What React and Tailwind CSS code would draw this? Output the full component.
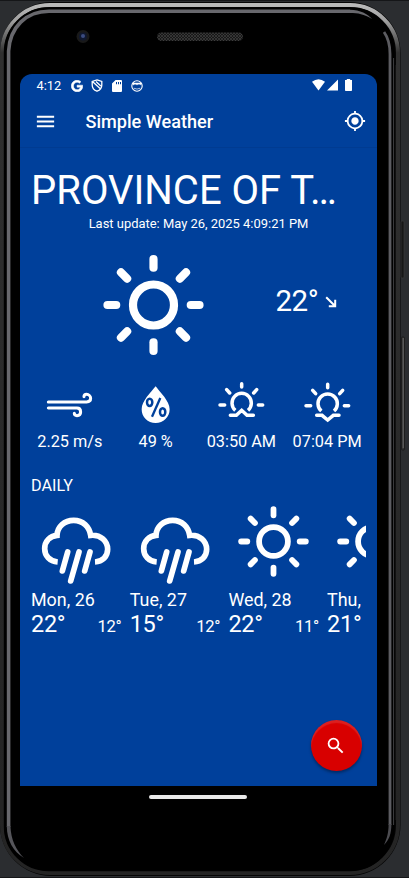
import { MdMenu, MdMyLocation, MdSearch } from "react-icons/md";
import { FaGoogle } from "react-icons/fa";

const RAYS = [0, 45, 90, 135, 180, 225, 270, 315];

function Sun({ className }) {
  return (
    <svg viewBox="0 0 101 101" className={className} fill="none" stroke="currentColor" strokeWidth="8.2" strokeLinecap="round">
      <circle cx="50.5" cy="50.5" r="20.5" />
      {RAYS.map((a) => (
        <path key={a} d="M50.5 13.2V4.5" transform={`rotate(${a} 50.5 50.5)`} />
      ))}
    </svg>
  );
}

function Rain({ className }) {
  return (
    <svg viewBox="64 78 212 208" className={className} fill="none" stroke="currentColor" strokeWidth="17">
      <path d="M114 216C90 214 75 197 75 176C75 153 91 138 112 136C113 110 134 91 162 91C190 91 209 110 213 136C243 133 264 153 264 178C264 200 248 215 226 216" />
      <path d="M144 186L128 243M178 186L153 273M211 186L195 243" strokeLinecap="round" />
    </svg>
  );
}

function Wind() {
  return (
    <svg viewBox="78 40 142 120" className="h-10 w-[47.3px]" fill="none" stroke="currentColor" strokeWidth="9" strokeLinecap="round">
      <path d="M85 94H200C208 94 212 89 212 83C212 76 206 71 200 71C194 71 192 75 192 78" />
      <path d="M85 112H171C179 112 182 118 182 124C182 131 177 135 171 135C166 135 163 132 163 128" />
    </svg>
  );
}

function Humidity() {
  return (
    <svg viewBox="358 40 100 120" className="h-10 w-[33.3px]">
      <path d="M408 47C421 65 450 91 450 116C450 140 431 157 408 157C384 157 366 140 366 116C366 91 394 65 408 47Z" fill="currentColor" />
      <g fill="none" stroke="#00409b">
        <ellipse cx="390" cy="95" rx="8" ry="11" strokeWidth="7.5" />
        <ellipse cx="429" cy="124" rx="8" ry="11.5" strokeWidth="7.5" />
        <path d="M422 82L397 138" strokeWidth="7" />
      </g>
    </svg>
  );
}

function Horizon({ set }) {
  return (
    <svg viewBox="80 30 146 126" className="-mt-[6px] h-[42px] w-[48.7px] overflow-visible" fill="none" stroke="currentColor" strokeWidth="10.5" strokeLinecap="round">
      <g transform={set ? "translate(0 2)" : undefined}>
        <path d="M154 41V51M109 59L118 69M199 59L190 69M89 105H103M204 105H217" />
        <path d="M135 121A29 29 0 1 1 173 121" strokeLinecap="butt" />
      </g>
      {set ? <path d="M121 136H137L154 150L171 136H188" /> : <path d="M120 136H138L154 121L170 136H189" />}
    </svg>
  );
}

function Bezel() {
  return (
    <svg aria-hidden="true" viewBox="0 0 409 878" className="absolute inset-0 h-full w-full" fill="none">
      <defs>
        <linearGradient id="rim" x1="0" y1="0" x2="0" y2="1">
          <stop offset="0" stopColor="#b9b9b9" />
          <stop offset=".018" stopColor="#a0a0a0" />
          <stop offset=".055" stopColor="#303030" />
          <stop offset="1" stopColor="#242424" />
        </linearGradient>
        <pattern id="mesh" width="3" height="3" patternUnits="userSpaceOnUse">
          <path d="M0 0H3V3H0Z" fill="#181818" />
          <path d="M0 0L3 3M3 0L0 3" stroke="#454545" strokeWidth=".6" />
        </pattern>
      </defs>
      <path d="M0 .5H409M0 877.5H409" stroke="#151618" />
      <rect x="0" y="2" width="400.5" height="874" rx="51" fill="#050505" />
      <rect x="2" y="5" width="396" height="868" rx="48" stroke="url(#rim)" strokeWidth="4" />
      <rect x="4.8" y="8.3" width="389" height="862" rx="44" stroke="#000" strokeWidth="2" fill="#000" />
      <path d="M8.6 827V51C10 27 26 11.3 49 11.3H350" stroke="#68686d" strokeWidth="3.6" />
      <path d="M350 9.8C360 10 368 14 372 19C364 14 358 13 350 13Z" fill="#68686d" />
      <path d="M384 32C389 39 390 46 390 54V825" stroke="#5c5c61" strokeWidth="2.8" />
      <path d="M6.8 826H10.4C11 840 16 850 24 858C13 851 7 841 6.8 826Z" fill="#55555a" />
      <path d="M388.6 824H391.4C391.4 834 389 840 384 845C387 838 388.6 833 388.6 824Z" fill="#4c4c51" />
      <path d="M393.6 58V825" stroke="#404043" />
      <path d="M395.5 65V820" stroke="#111" />
      <rect x="401" y="221" width="3" height="57" rx="1" fill="#171717" stroke="#3c3c3d" strokeWidth=".6" />
      <rect x="401.5" y="337" width="3" height="113" rx="1" fill="#333" stroke="#161616" strokeWidth=".7" />
      <path d="M403.2 338V448" stroke="#777" strokeWidth=".8" />
      <circle cx="83" cy="36.5" r="6.5" fill="#191919" />
      <circle cx="83" cy="36.5" r="4" fill="#10182f" />
      <circle cx="83" cy="36" r="2" fill="#3b4c80" />
      <rect x="157" y="32.5" width="86" height="8.5" rx="4.2" fill="url(#mesh)" />
    </svg>
  );
}

function StatusBar() {
  return (
    <div className="flex h-[23px] items-center pl-[16.5px] pr-[25px] text-[12.8px]">
      <span className="w-[34px]">4:12</span>
      <FaGoogle className="h-3 w-3" stroke="currentColor" strokeWidth="22" />
      <svg viewBox="0 0 12 13" className="ml-[8.5px] h-[13px] w-3" fill="none" stroke="currentColor" strokeWidth="1.3">
        <path d="M6 .9L10.8 2.5V6C10.8 9 8.8 11.2 6 12.2C3.2 11.2 1.2 9 1.2 6V2.5ZM2 3L9.6 10M5 2.5L9.8 7" />
      </svg>
      <svg viewBox="0 0 10 12" className="ml-[9px] h-3 w-2.5" fill="currentColor">
        <path fillRule="evenodd" d="M3.6 0H9Q10 0 10 1V11Q10 12 9 12H1Q0 12 0 11V3.6ZM4 2V4.2H5V2ZM6 2V4.2H7V2ZM8 2V4.2H9V2Z" />
      </svg>
      <svg viewBox="0 0 12 12" className="ml-[9px] h-3 w-3" fill="none" stroke="currentColor" strokeWidth="1.1">
        <circle cx="6" cy="6" r="5.2" />
        <path d="M1.5 3H10.5L9.8 4.8L8 4L6 4.8L4 4L2.2 5Z" fill="currentColor" strokeWidth=".5" />
        <path d="M2.8 8.2Q6 10 9.2 8.2" strokeWidth=".7" />
      </svg>
      <svg viewBox="0 0 40 12" className="ml-auto h-3 w-10 -translate-y-px" fill="currentColor">
        <path d="M0 2.8Q6.5-2.2 13 2.8L6.5 11.5Z" />
        <path d="M26 .5V11.5H15Z" />
        <path d="M34.8 1V0H38.2V1H40V11.2Q40 12 39.2 12H33.8Q33 12 33 11.2V1Z" />
      </svg>
    </div>
  );
}

const stats = [
  { icon: <Wind />, label: "2.25 m/s" },
  { icon: <Humidity />, label: "49 %" },
  { icon: <Horizon />, label: "03:50 AM" },
  { icon: <Horizon set />, label: "07:04 PM" },
];

const days = [
  { day: "Mon, 26", hi: "22°", lo: "12°", rain: true },
  { day: "Tue, 27", hi: "15°", lo: "12°", rain: true },
  { day: "Wed, 28", hi: "22°", lo: "11°" },
  { day: "Thu,", hi: "21°" },
];

export default function App() {
  return (
    <div className="relative h-[878px] w-[409px] overflow-hidden bg-[#2b2d30] pl-5 pt-[74px] font-['Roboto',sans-serif] text-white">
      <Bezel />
      <main className="relative flex h-[712px] w-[357px] flex-col rounded-t-[12px] bg-[#00409b]">
        <StatusBar />
        <header className="flex h-[51px] items-center border-b border-[#003b91] pl-[14px] pr-[11px]">
          <MdMenu className="h-[23px] w-[23px] -translate-y-px" />
          <h1 className="ml-[28.5px] text-[18.1px] font-medium">Simple Weather</h1>
          <MdMyLocation className="ml-auto h-[22px] w-[22px] -translate-y-px" />
        </header>
        <h2 className="-mb-px mt-[19px] h-12 pl-[11px] text-[40px] leading-[48px] whitespace-nowrap">PROVINCE OF T…</h2>
        <p className="h-5 text-center text-[12.95px] leading-5">Last update: May 26, 2025 4:09:21 PM</p>
        <section className="mt-5 flex h-[102px] items-center pl-[82.5px]">
          <Sun className="h-[101px] w-[101px] -translate-y-[0.5px]" />
          <div className="ml-[72px] flex -translate-y-[4px] items-center">
            <span className="text-[29.5px] leading-8 tracking-[-0.5px]">22°</span>
            <svg viewBox="0 0 12 12" className="ml-[7px] mt-0.5 h-3 w-3" fill="none" stroke="currentColor" strokeWidth="2">
              <path d="M1.2 1.2L10 10M10.2 3.8V10.2H3.8" />
            </svg>
          </div>
        </section>
        <section className="ml-[7px] mt-[25px] grid w-[343px] grid-cols-4">
          {stats.map((s) => (
            <div key={s.label} className="flex flex-col items-center">
              <div className="flex h-[46px] items-center">{s.icon}</div>
              <span className="mt-1 text-[16.3px] leading-[22px] whitespace-nowrap">{s.label}</span>
            </div>
          ))}
        </section>
        <h3 className="mt-[23px] pl-[11px] text-[16.2px] leading-[20px]">DAILY</h3>
        <section className="ml-[11px] mt-[10px] flex w-[335px] gap-[8.2px] overflow-hidden">
          {days.map((d) => (
            <div key={d.day} className="w-[90.5px] shrink-0">
              <div className="flex h-[83px] justify-center">
                {d.rain ? <Rain className="mt-[10px] h-[69.3px] w-[70.7px]" /> : <Sun className="h-[71px] w-[71px]" />}
              </div>
              <div className="text-[17.9px] leading-[22px]">{d.day}</div>
              <div className="flex h-[26px] items-baseline justify-between leading-[26px] tracking-[-0.3px]">
                <span className="text-[23.5px]">{d.hi}</span>
                {d.lo && <span className="text-[16.6px]">{d.lo}</span>}
              </div>
            </div>
          ))}
        </section>
        <button className="mb-[15px] ml-auto mr-[15.5px] mt-auto flex h-[51px] w-[51px] items-center justify-center rounded-full bg-[#d80000] shadow-[0_2px_3px_rgba(0,0,0,0.35),inset_0_3px_1px_rgba(255,255,255,0.12)]">
          <MdSearch className="h-[21.5px] w-[21.5px]" />
        </button>
      </main>
      <div className="relative ml-[129px] mt-[9px] h-1 w-[98px] rounded-full bg-[#e9e9e9]" />
    </div>
  );
}
